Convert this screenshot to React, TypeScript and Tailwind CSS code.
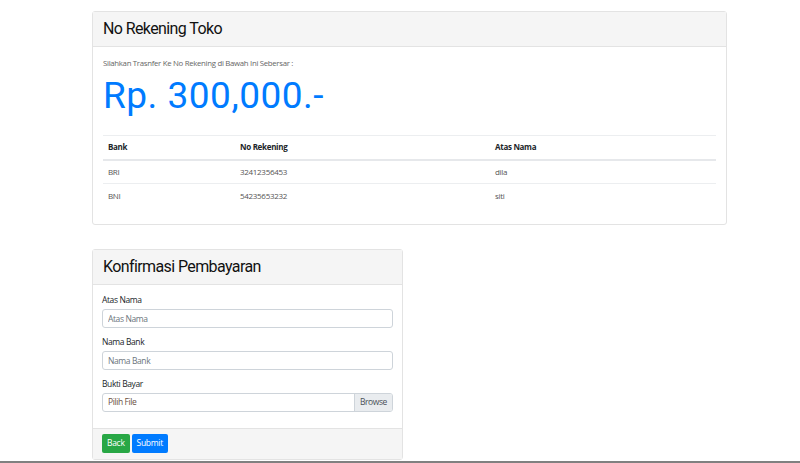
import React from 'react'

const rekening = [
  { bank: 'BRI', no: '32412356453', nama: 'dila' },
  { bank: 'BNI', no: '54235653232', nama: 'siti' },
]

function Field({ label, placeholder }: { label: string; placeholder: string }) {
  return (
    <div className="flex flex-col">
      <label className="text-[8.5px] tracking-[-0.4px] leading-[12px] text-[#212529] mb-[3px]">{label}</label>
      <input
        placeholder={placeholder}
        className="h-[19px] w-full border border-[#ced4da] rounded-[3px] px-[5px] text-[8.5px] tracking-[-0.4px] text-[#495057] placeholder:text-[#6c757d] outline-none"
      />
    </div>
  )
}

export default function App() {
  return (
    <div className="w-[800px] h-[463px] bg-white flex flex-col font-['Open_Sans',sans-serif] text-[#212529] overflow-hidden">
      <div className="flex-1 pl-[92px] pt-[11px]">
        {/* rekening toko */}
        <div className="w-[635px] border border-[#e3e3e3] rounded-[3px]">
          <div className="h-[35px] bg-[#f5f5f5] border-b border-[#e3e3e3] flex items-center px-[10px]">
            <h3 className="text-[16px] tracking-[-0.6px] font-['Roboto',sans-serif] text-[#111]">No Rekening Toko</h3>
          </div>
          <div className="px-[10px] pt-[10px] pb-[16px]">
            <p className="text-[7.8px] tracking-[-0.3px] leading-[12px] text-[#666]">Silahkan Trasnfer Ke No Rekening di Bawah Ini Sebersar :</p>
            <h1 className="text-[37px] leading-[40px] mt-[7px] font-['Roboto',sans-serif] text-[#007bff] tracking-[0.5px]">Rp. 300,000.-</h1>
            <table className="w-full mt-[19px] text-[8px] tracking-[-0.3px] border-collapse">
              <thead>
                <tr className="border-t border-[#eceef0] border-b-2 border-b-[#e6e8eb]">
                  <th className="text-left font-bold h-[24px] pl-[5px] w-[137px]">Bank</th>
                  <th className="text-left font-bold w-[255px]">No Rekening</th>
                  <th className="text-left font-bold">Atas Nama</th>
                </tr>
              </thead>
              <tbody className="text-[#555]">
                {rekening.map((r, i) => (
                  <tr key={i} className={i === 0 ? 'border-b border-[#eceef0]' : ''}>
                    <td className="h-[24px] pl-[5px]">{r.bank}</td>
                    <td>{r.no}</td>
                    <td>{r.nama}</td>
                  </tr>
                ))}
              </tbody>
            </table>
          </div>
        </div>

        {/* konfirmasi */}
        <div className="w-[311px] mt-[24px] border border-[#e3e3e3] rounded-[3px]">
          <div className="h-[35px] bg-[#f5f5f5] border-b border-[#e3e3e3] flex items-center px-[10px]">
            <h3 className="text-[16px] tracking-[-0.6px] font-['Roboto',sans-serif] text-[#111]">Konfirmasi Pembayaran</h3>
          </div>
          <div className="px-[9px] pt-[9px] pb-[16px] flex flex-col gap-[8px]">
            <Field label="Atas Nama" placeholder="Atas Nama" />
            <Field label="Nama Bank" placeholder="Nama Bank" />
            <div className="flex flex-col">
              <label className="text-[8.5px] tracking-[-0.4px] leading-[12px] mb-[3px]">Bukti Bayar</label>
              <div className="h-[19px] flex border border-[#ced4da] rounded-[3px] text-[8.5px] tracking-[-0.4px] overflow-hidden">
                <span className="flex-1 flex items-center px-[5px] text-[#6b4f3f]">Pilih File</span>
                <span className="flex items-center px-[5px] bg-[#e9ecef] border-l border-[#ced4da] text-[#495057]">Browse</span>
              </div>
            </div>
          </div>
          <div className="h-[31px] bg-[#f5f5f5] border-t border-[#e3e3e3] flex items-center gap-[2px] px-[9px]">
            <button className="h-[19px] px-[5px] bg-[#28a745] text-white text-[8.5px] tracking-[-0.3px] rounded-[2px]">Back</button>
            <button className="h-[19px] px-[5px] bg-[#007bff] text-white text-[8.5px] tracking-[-0.3px] rounded-[2px]">Submit</button>
          </div>
        </div>
      </div>
      <div className="h-[2px] bg-[#808080]" />
    </div>
  )
}
